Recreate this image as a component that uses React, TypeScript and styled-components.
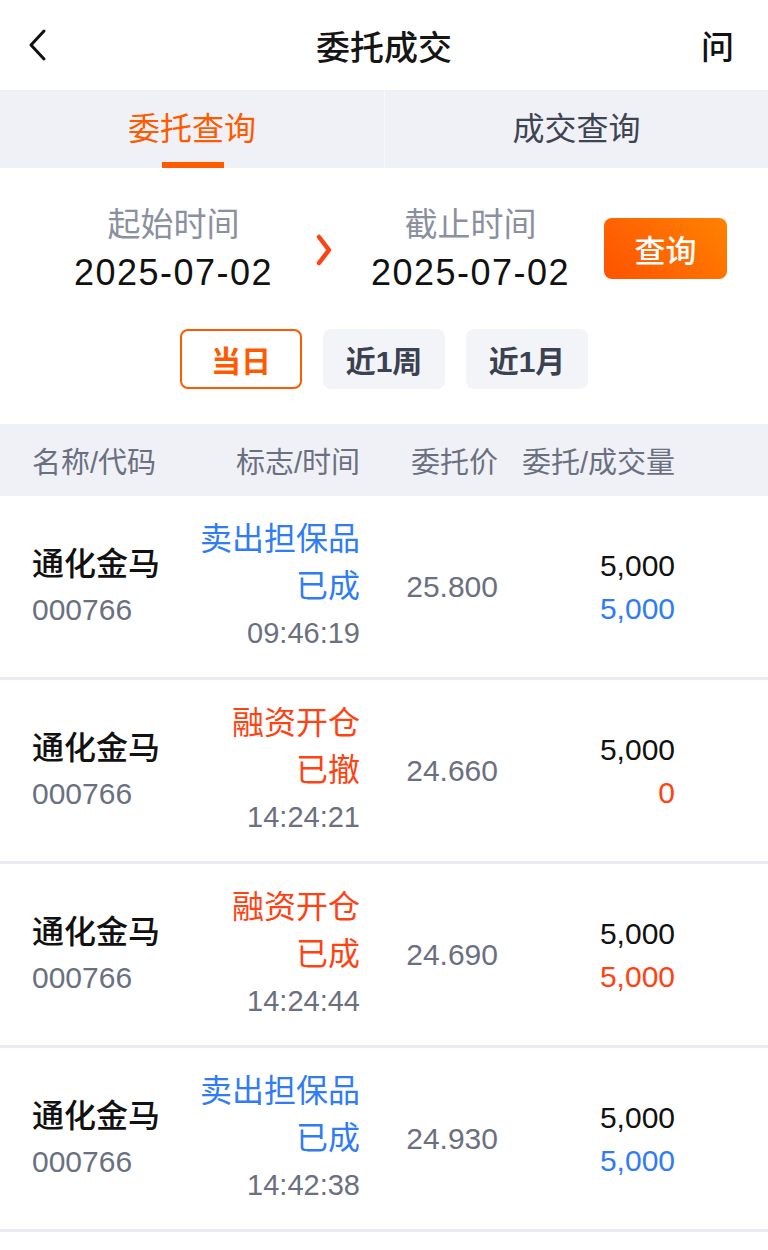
import React from 'react';
import styled, { createGlobalStyle } from 'styled-components';

const GlobalStyle = createGlobalStyle`
  html, body {
    margin: 0;
    padding: 0;
    background: #ffffff;
  }
  body {
    font-family: "Liberation Sans", "Noto Sans CJK SC", sans-serif;
    color: #111111;
  }
`;

const ORANGE = '#ff5a00';
const RED = '#ff4212';
const BLUE = '#2f7cf6';
const GRAY = '#6b7081';

const Page = styled.div`
  width: 768px;
  min-height: 1250px;
  background: #ffffff;
`;

const NavBar = styled.div`
  height: 90px;
  display: grid;
  grid-template-columns: 90px 1fr 90px;
  align-items: center;

  .nav-back {
    padding-left: 28px;
    display: flex;
    align-items: center;
  }

  .nav-title {
    text-align: center;
    font-size: 34px;
    font-weight: 500;
    color: #151515;
  }

  .nav-help {
    text-align: right;
    padding-right: 34px;
    font-size: 33px;
    font-weight: 500;
    color: #111;
  }
`;

const TabBar = styled.div`
  height: 78px;
  background: #f0f1f6;
  display: grid;
  grid-template-columns: 1fr 1fr;
`;

const Tab = styled.div<{ $active?: boolean }>`
  position: relative;
  display: flex;
  align-items: center;
  justify-content: center;
  padding-bottom: 6px;
  font-size: 32px;
  color: ${(p) => (p.$active ? ORANGE : '#3e4452')};
  border-left: ${(p) => (p.$active ? 'none' : '1px solid #f6f7fa')};

  &::after {
    content: '';
    display: ${(p) => (p.$active ? 'block' : 'none')};
    position: absolute;
    bottom: 0;
    left: 50%;
    width: 62px;
    height: 6px;
    margin-left: -30px;
    background: ${ORANGE};
  }
`;

const DateRow = styled.div`
  display: flex;
  align-items: center;
  padding: 34px 0 0 72px;
`;

const DateBlock = styled.div`
  width: 203px;
  flex-shrink: 0;
  display: flex;
  flex-direction: column;
  align-items: center;
  white-space: nowrap;

  .date-label {
    font-size: 33px;
    line-height: 46px;
    color: #8b90a0;
  }

  .date-value {
    font-size: 36px;
    line-height: 50px;
    letter-spacing: 1.5px;
    color: #111;
  }
`;

const Arrow = styled.div`
  width: 16px;
  flex-shrink: 0;
  margin: 0 37px 0 41px;
  display: flex;
`;

const QueryButton = styled.button`
  flex-shrink: 0;
  margin-left: 32px;
  margin-top: -4px;
  width: 123px;
  height: 61px;
  border: none;
  border-radius: 8px;
  background: linear-gradient(45deg, #ff5200 0%, #ff8200 100%);
  color: #fff;
  font-family: inherit;
  font-size: 31px;
  font-weight: 500;
  padding: 0;
`;

const RangeRow = styled.div`
  display: flex;
  justify-content: center;
  gap: 21px;
  padding: 31px 0 35px;
`;

const RangePill = styled.div<{ $active?: boolean }>`
  width: 122px;
  height: 60px;
  box-sizing: border-box;
  border-radius: 8px;
  display: flex;
  align-items: center;
  justify-content: center;
  font-size: 30px;
  font-weight: 700;
  color: ${(p) => (p.$active ? ORANGE : '#3b4150')};
  background: ${(p) => (p.$active ? '#fff' : '#f3f4f8')};
  border: 2px solid ${(p) => (p.$active ? ORANGE : '#f3f4f8')};
`;

const Grid = styled.div`
  display: grid;
  grid-template-columns: 168px 160px 138px 177px;
  padding: 0 93px 0 32px;
`;

const HeaderRow = styled(Grid)`
  height: 72px;
  align-items: center;
  background: #f0f1f6;
  font-size: 29px;
  color: ${GRAY};

  .head-right {
    text-align: right;
  }
`;

const OrderRow = styled(Grid)`
  height: 181px;
  align-items: center;
  border-bottom: 3px solid #e9ebf0;
`;

const NameCell = styled.div`
  display: flex;
  flex-direction: column;

  .stock-name {
    font-size: 32px;
    line-height: 46px;
    font-weight: 500;
    color: #111;
  }

  .stock-code {
    font-size: 30px;
    line-height: 46px;
    color: ${GRAY};
  }
`;

const FlagCell = styled.div<{ $color: string }>`
  display: flex;
  flex-direction: column;
  align-items: flex-end;

  .flag-text {
    font-size: 32px;
    line-height: 47px;
    color: ${(p) => p.$color};
  }

  .flag-time {
    font-size: 29px;
    line-height: 47px;
    color: ${GRAY};
  }
`;

const PriceCell = styled.div`
  text-align: right;
  font-size: 30px;
  color: ${GRAY};
`;

const QtyCell = styled.div<{ $color: string }>`
  display: flex;
  flex-direction: column;
  align-items: flex-end;
  font-size: 30px;
  line-height: 43px;

  .qty-order {
    color: #111;
  }

  .qty-deal {
    color: ${(p) => p.$color};
  }
`;

type Order = {
  flag: string;
  status: string;
  time: string;
  price: string;
  qty: string;
  deal: string;
  color: string;
};

const orders: Order[] = [
  { flag: '卖出担保品', status: '已成', time: '09:46:19', price: '25.800', qty: '5,000', deal: '5,000', color: BLUE },
  { flag: '融资开仓', status: '已撤', time: '14:24:21', price: '24.660', qty: '5,000', deal: '0', color: RED },
  { flag: '融资开仓', status: '已成', time: '14:24:44', price: '24.690', qty: '5,000', deal: '5,000', color: RED },
  { flag: '卖出担保品', status: '已成', time: '14:42:38', price: '24.930', qty: '5,000', deal: '5,000', color: BLUE },
];

const App: React.FC = () => {
  return (
    <Page>
      <GlobalStyle />
      <NavBar>
        <div className="nav-back">
          <svg width="20" height="34" viewBox="0 0 20 34">
            <polyline points="16,3 3,17 16,31" fill="none" stroke="#111" strokeWidth="3" strokeLinecap="round" strokeLinejoin="round" />
          </svg>
        </div>
        <div className="nav-title">委托成交</div>
        <div className="nav-help">问</div>
      </NavBar>

      <TabBar>
        <Tab $active>委托查询</Tab>
        <Tab>成交查询</Tab>
      </TabBar>

      <DateRow>
        <DateBlock>
          <span className="date-label">起始时间</span>
          <span className="date-value">2025-07-02</span>
        </DateBlock>
        <Arrow>
          <svg width="16" height="32" viewBox="0 0 16 32">
            <polyline points="3,3 13,16 3,29" fill="none" stroke={RED} strokeWidth="4.5" strokeLinecap="round" strokeLinejoin="round" />
          </svg>
        </Arrow>
        <DateBlock>
          <span className="date-label">截止时间</span>
          <span className="date-value">2025-07-02</span>
        </DateBlock>
        <QueryButton>查询</QueryButton>
      </DateRow>

      <RangeRow>
        <RangePill $active>当日</RangePill>
        <RangePill>近1周</RangePill>
        <RangePill>近1月</RangePill>
      </RangeRow>

      <HeaderRow>
        <div>名称/代码</div>
        <div className="head-right">标志/时间</div>
        <div className="head-right">委托价</div>
        <div className="head-right">委托/成交量</div>
      </HeaderRow>

      {orders.map((o, i) => (
        <OrderRow key={i}>
          <NameCell>
            <span className="stock-name">通化金马</span>
            <span className="stock-code">000766</span>
          </NameCell>
          <FlagCell $color={o.color}>
            <span className="flag-text">{o.flag}</span>
            <span className="flag-text">{o.status}</span>
            <span className="flag-time">{o.time}</span>
          </FlagCell>
          <PriceCell>{o.price}</PriceCell>
          <QtyCell $color={o.color}>
            <span className="qty-order">{o.qty}</span>
            <span className="qty-deal">{o.deal}</span>
          </QtyCell>
        </OrderRow>
      ))}
    </Page>
  );
};

export default App;
